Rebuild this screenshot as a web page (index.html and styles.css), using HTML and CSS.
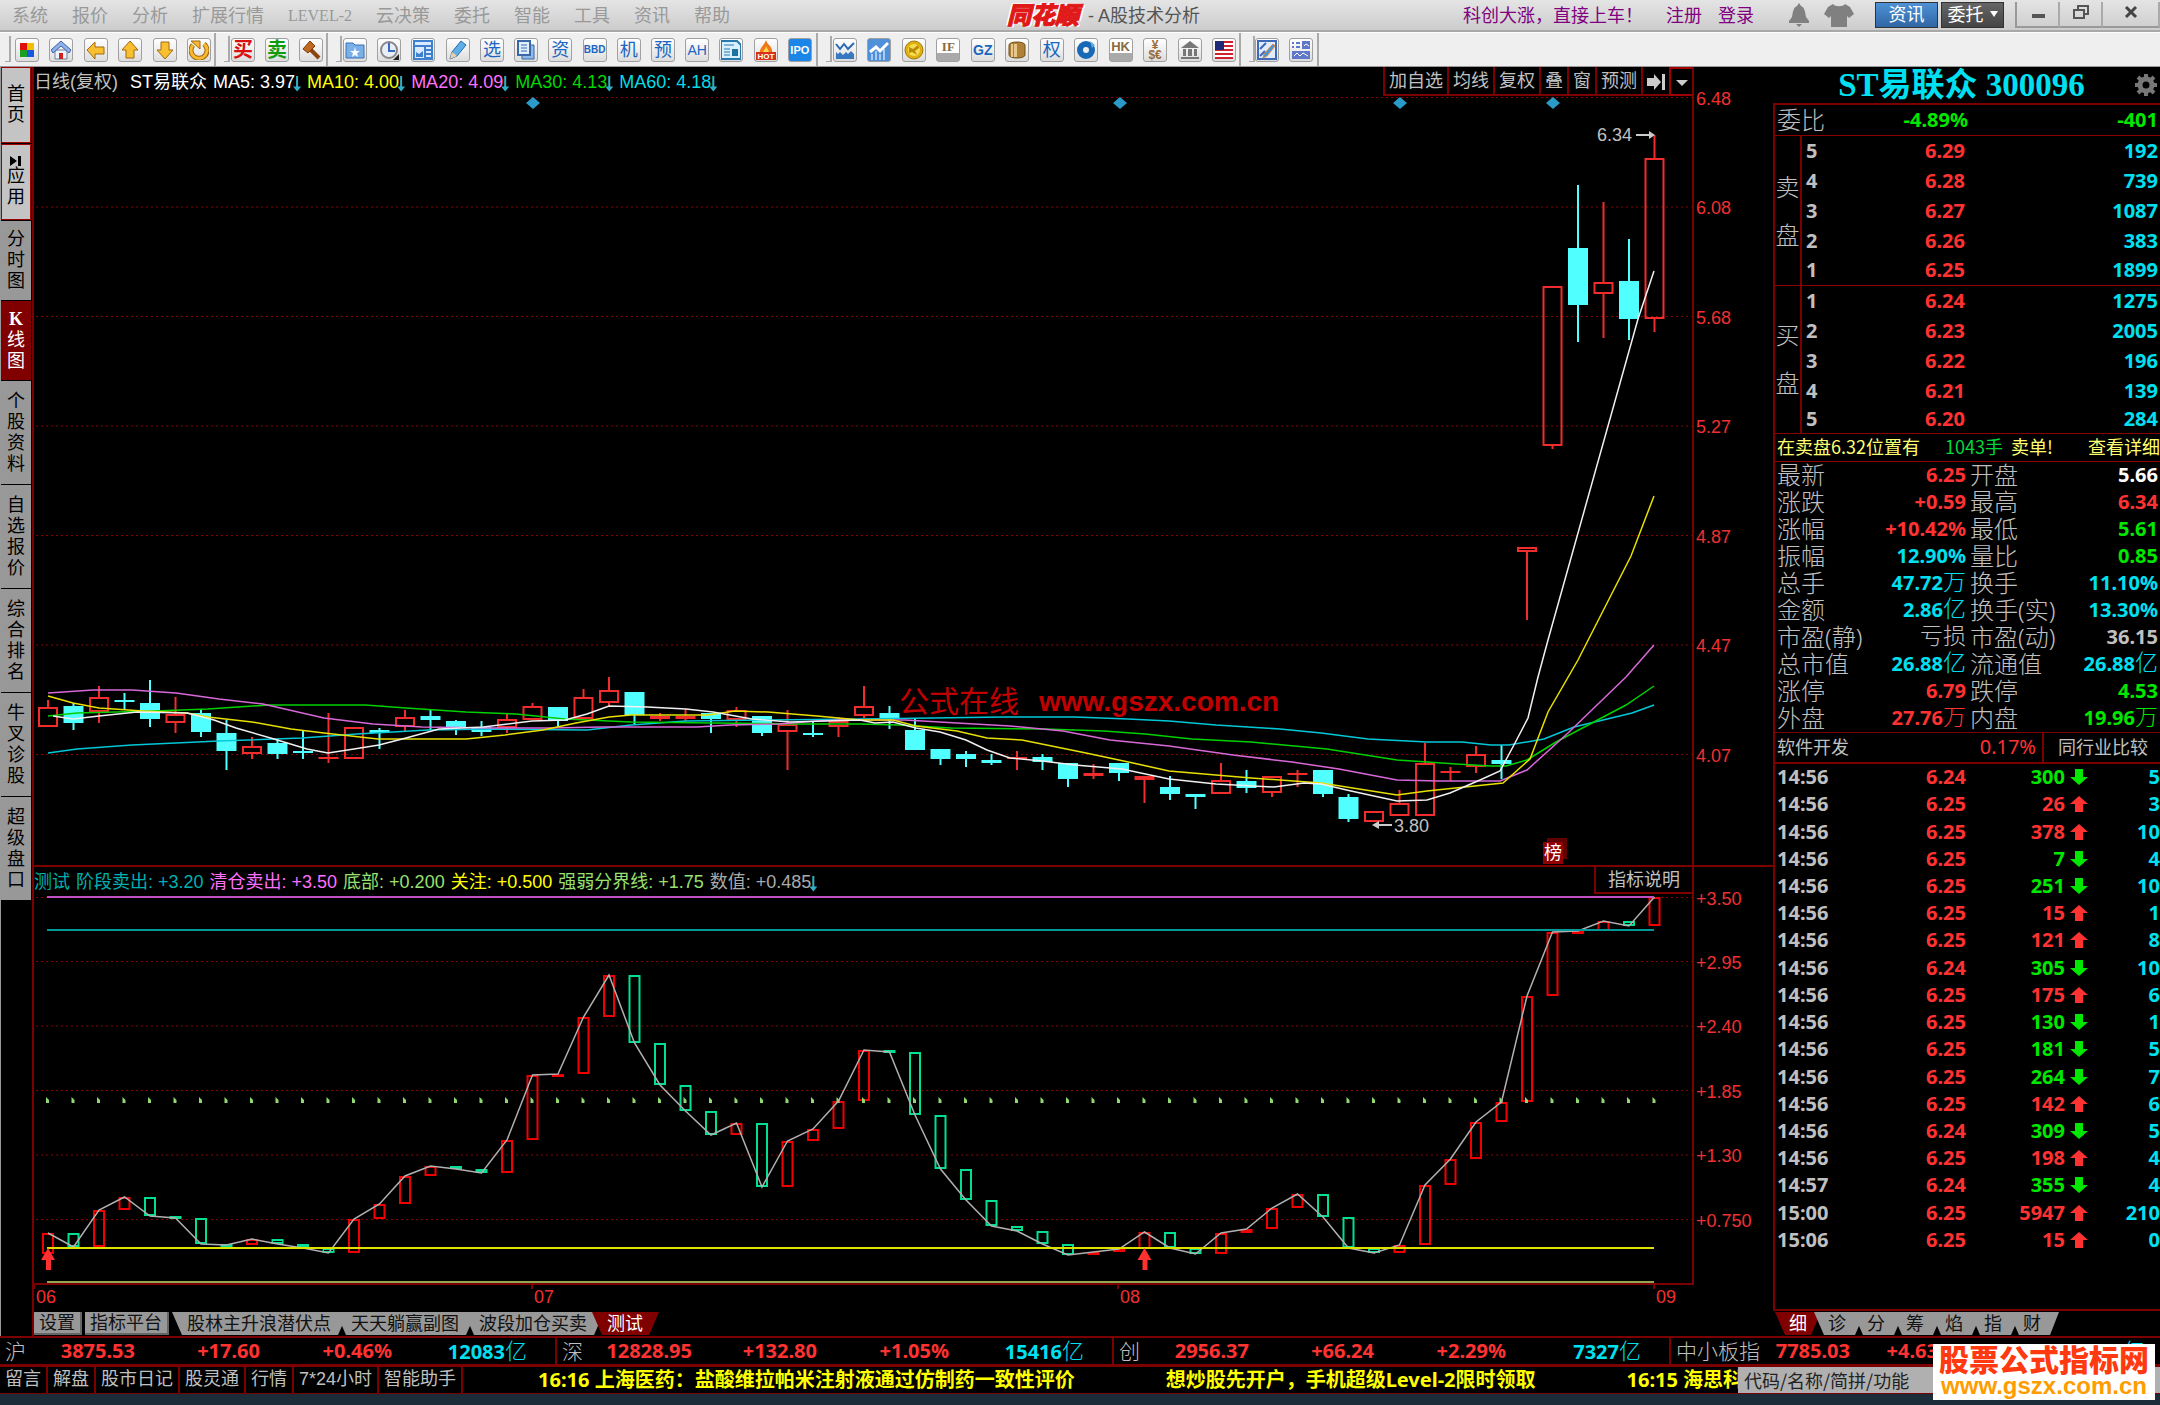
FILE: index.html
```html
<!DOCTYPE html>
<html lang="zh-CN">
<head>
  <meta charset="UTF-8">
  <meta name="viewport" content="width=device-width, initial-scale=1.0">
  <title>同花顺 - A股技术分析</title>
  <link rel="stylesheet" href="styles.css">
</head>
<body>
  <!-- title bar -->
  <header class="titlebar">
    <nav class="menu">
      <a href="#">系统</a><a href="#">报价</a><a href="#">分析</a><a href="#">扩展行情</a><a href="#" class="level">LEVEL-2</a><a href="#">云决策</a><a href="#">委托</a><a href="#">智能</a><a href="#">工具</a><a href="#">资讯</a><a href="#">帮助</a>
    </nav>
    <div class="caption"><span class="brand">同花顺</span><span>- A股技术分析</span></div>
    <div class="account">
      <a href="#" class="promo">科创大涨，直接上车！</a>
      <a href="#">注册</a>
      <a href="#">登录</a>
    </div>
    <svg class="bell" viewBox="0 0 22 24"><path d="M11 0l2 3c4 2 4 6 5 11l3 4v2H1v-2l3-4C5 9 5 5 9 3zM8 21h6l-3 3z" fill="#808080"/></svg>
    <svg class="shirt" viewBox="0 0 30 24"><path d="M9 1c2 3 10 3 12 0l5 3 4 7-5 4-2-2v11H7V13l-2 2-5-4 4-7z" fill="#808080"/></svg>
    <button class="head-btn blue">资讯</button>
    <button class="head-btn dark">委托<svg viewBox="0 0 8 6"><path d="M0 0h8L4 6z" fill="#fff"/></svg></button>
    <div class="win">
      <button aria-label="最小化"><svg viewBox="0 0 16 16"><path d="M2 10h13v4H2z" fill="#555"/></svg></button>
      <button aria-label="还原"><svg viewBox="0 0 16 16"><path d="M5 5V2h10v8h-4M1 6h10v8H1z" fill="none" stroke="#555" stroke-width="2"/></svg></button>
      <button aria-label="关闭"><svg viewBox="0 0 16 16"><path d="M3 3l10 10M13 3L3 13" stroke="#444" stroke-width="3"/></svg></button>
    </div>
  </header>

  <!-- icon toolbar -->
  <div class="toolbar">
    <div class="tools g1">
      <button aria-label="行情"><svg viewBox="0 0 20 20"><path d="M3 3h7v7H3z" fill="#e01010"/><path d="M10 3h7v7h-7z" fill="#f0c000"/><path d="M3 10h7v7H3z" fill="#18a020"/><path d="M10 10h7v7h-7z" fill="#1858e0"/></svg></button>
      <button aria-label="主页"><svg viewBox="0 0 20 20"><path d="M4 10h12v9H4z" fill="#eef2fa" stroke="#7080a0"/><path d="M10 1L0 10l2 3 8-7 8 7 2-3z" fill="#90b0e8" stroke="#4060a8"/><path d="M8 13h4v6H8z" fill="#d02020"/></svg></button>
      <button aria-label="后退"><svg viewBox="0 0 20 20"><path d="M1 10l8-8v5h9v7H9v5z" fill="#f8c030" stroke="#a06810"/></svg></button>
      <button aria-label="向上"><svg viewBox="0 0 20 20"><path d="M10 1l8 9h-4v8H6v-8H2z" fill="#f8c030" stroke="#a06810"/></svg></button>
      <button aria-label="向下"><svg viewBox="0 0 20 20"><path d="M10 19l8-9h-4V2H6v8H2z" fill="#f8c030" stroke="#a06810"/></svg></button>
      <button aria-label="刷新"><svg viewBox="0 0 20 20"><path d="M4 5a8 8 0 1 0 11-1" fill="none" stroke="#a06810" stroke-width="5"/><path d="M4 5a8 8 0 1 0 11-1" fill="none" stroke="#f8b830" stroke-width="3"/><path d="M2 1h9v8z" fill="#f8b830" stroke="#a06810"/></svg></button>
    </div>
    <div class="tools g2">
      <button class="buy">买</button>
      <button class="sell">卖</button>
      <button aria-label="委托"><svg viewBox="0 0 20 20"><path d="M9 9l9 9" stroke="#8a4510" stroke-width="4"/><path d="M2 9l7-8 5 5-7 7z" fill="#c06a20" stroke="#7a3a08"/></svg></button>
    </div>
    <div class="tools g3">
      <button aria-label="自选股"><svg viewBox="0 0 20 20"><path d="M1 3h7l2 2h9v13H1z" fill="#7ab0e8" stroke="#3870b8"/><path d="M10 7l1 4h4l-3 2 1 4-3-2-3 2 1-4-3-2h4z" fill="#fff"/></svg></button>
      <button aria-label="历史"><svg viewBox="0 0 20 20"><circle cx="10" cy="10" r="8" fill="#e8eef8" stroke="#888" stroke-width="2"/><path d="M10 3v8h6" fill="none" stroke="#3868c0" stroke-width="2"/><path d="M20 14v6h-6z" fill="#222"/></svg></button>
      <button aria-label="报表"><svg viewBox="0 0 20 20"><path d="M0 0h20v20H0z" fill="#3f80cc"/><path d="M2 2h16v3H2zM2 7h9v11H2zM13 7h5v2h-5zM13 11h5v2h-5zM13 15h5v2h-5z" fill="#d8eaff"/><path d="M3 12l3 2 4-3v6H3z" fill="#3f80cc"/></svg></button>
      <button aria-label="画笔"><svg viewBox="0 0 20 20"><path d="M4 12L13 1l5 4L9 16l-7 3z" fill="#60b0e8" stroke="#2868a8"/><path d="M4 12l5 4-7 3z" fill="#f0d0a0"/></svg></button>
      <button>选</button>
      <button aria-label="文档"><svg viewBox="0 0 20 20"><path d="M6 5h12v14H6z" fill="#90b8e8" stroke="#3868a8"/><path d="M2 1h12v14H2z" fill="#e0eefc" stroke="#3868a8" stroke-width="2"/><path d="M5 5h6M5 8h6M5 11h6" stroke="#3868a8"/></svg></button>
      <button>资</button>
      <button class="narrow">BBD</button>
      <button>机</button>
      <button>预</button>
      <button class="latin">AH</button>
      <button aria-label="新闻"><svg viewBox="0 0 20 20"><path d="M0 1h16l4 4v14H0z" fill="#d8f0fc" stroke="#2878b0" stroke-width="2"/><path d="M3 5h10M3 9h6M3 12h6M3 15h6" stroke="#2878b0"/><path d="M11 9h6v7h-6z" fill="#2070a0"/></svg></button>
      <button aria-label="热点"><svg viewBox="0 0 20 20"><path d="M10 0c1 5 7 6 6 13H4C3 8 8 6 10 0z" fill="#f07818"/><path d="M10 6c1 3 3 4 3 7H7c0-3 3-4 3-7z" fill="#ffd850"/><path d="M0 12h20v8H0z" fill="#d83018"/><text x="10" y="19" class="ico-hot">HOT</text></svg></button>
      <button class="ipo">IPO</button>
    </div>
    <div class="tools g4">
      <button aria-label="大盘"><svg viewBox="0 0 20 20"><path d="M1 4l4 5 4-5 4 5 6-6" fill="none" stroke="#2868b0" stroke-width="2"/><path d="M1 12l2 2 2-2 3 3 3-3 2 2 3-3 3 3v5H1z" fill="#3878c0"/></svg></button>
      <button class="full" aria-label="走势"><svg viewBox="0 0 20 20"><path d="M0 0h20v20H0z" fill="#5090d8"/><path d="M3 14v6M7 11v9M11 14v6M15 9v11" stroke="#a8ccf4" stroke-width="2"/><path d="M1 12l6-5 4 4 8-8" fill="none" stroke="#fff" stroke-width="3"/></svg></button>
      <button aria-label="期货"><svg viewBox="0 0 20 20"><circle cx="10" cy="10" r="9" fill="#e0b010" stroke="#a07808"/><circle cx="10" cy="10" r="6" fill="#f8dc50"/><path d="M5 7l4 2 5-4 1 3-4 3 2 4-5-3-3 1z" fill="#b88a08"/></svg></button>
      <button class="stamp serif">IF</button>
      <button class="latin bold">GZ</button>
      <button aria-label="基金"><svg viewBox="0 0 20 20"><path d="M2 5c0-4 16-4 16 0v10c0 4-16 4-16 0z" fill="#b08038" stroke="#705018"/><path d="M4 4h2v13H4zM7 4h3v13H7z" fill="#e8c888"/></svg></button>
      <button>权</button>
      <button aria-label="外汇"><svg viewBox="0 0 20 20"><circle cx="10" cy="10" r="6" fill="none" stroke="#1868b8" stroke-width="6"/><path d="M14 1l5 4-3 3z" fill="#60a8e8"/></svg></button>
      <button class="stamp">HK</button>
      <button class="money"><span>¥</span><span>$€</span></button>
      <button aria-label="债券"><svg viewBox="0 0 20 20"><path d="M10 1l9 7H1z" fill="#777"/><path d="M3 9h3v7H3zM8 9h4v7H8zM14 9h3v7h-3zM1 17h18v2H1z" fill="#777"/></svg></button>
      <button aria-label="美股"><svg viewBox="0 0 20 20"><path d="M1 1h18v18H1z" fill="#fff"/><path d="M1 2h18M1 6h18M1 10h18M1 14h18M1 18h18" stroke="#d02030" stroke-width="2"/><path d="M1 1h9v9H1z" fill="#202878"/></svg></button>
    </div>
    <div class="tools g5">
      <button aria-label="画线"><svg viewBox="0 0 20 20"><path d="M1 1h18v18H1z" fill="#e0ecfa" stroke="#4068b8" stroke-width="2"/><path d="M3 9l6-6M3 16l5-5" stroke="#4068b8" stroke-width="2"/><path d="M7 14l9-10 2 2L10 16l-4 2z" fill="#4098e0" stroke="#e08030"/></svg></button>
      <button aria-label="版面"><svg viewBox="0 0 20 20"><path d="M1 2h2v2H1zM5 2h4v2H5zM1 6h2v2H1zM5 6h4v2H5zM11 1h8v8h-8zM1 11h18v8H1z" fill="#6078c8"/><path d="M3 16l3-3 3 3 3-3 5 3M13 6l2-2 3 2" fill="none" stroke="#fff"/></svg></button>
    </div>
  </div>

  <main class="workspace">
    <nav class="side-tabs">
      <a href="#" class="light">首页</a>
      <a href="#" class="light"><svg viewBox="0 0 12 10"><path d="M0 0l7 5-7 5zM8 0h3v10H8z"/></svg>应用</a>
      <a href="#" class="t3">分时图</a>
      <a href="#" class="t3 active"><b>K</b>线图</a>
      <a href="#">个股资料</a>
      <a href="#">自选报价</a>
      <a href="#">综合排名</a>
      <a href="#">牛叉诊股</a>
      <a href="#">超级盘口</a>
    </nav>

    <section class="charts">
      <div class="chart-head">
        <div class="legend">
          <span>日线(复权)</span>
          <span class="white name">ST易联众</span>
          <span class="white dn">MA5: 3.97</span>
          <span class="yellow dn">MA10: 4.00</span>
          <span class="pink dn">MA20: 4.09</span>
          <span class="green dn">MA30: 4.13</span>
          <span class="cyan dn">MA60: 4.18</span>
        </div>
        <div class="chart-btns">
          <button>加自选</button><button>均线</button><button>复权</button><button>叠</button><button>窗</button><button>预测</button><button aria-label="移到最右"><svg viewBox="0 0 18 16"><path d="M0 4h7V0l7 8-7 8v-4H0zM15 0h3v16h-3z" fill="#ccc"/></svg></button><button class="more" aria-label="更多"><svg class="tri" viewBox="0 0 12 6"><path d="M0 0h12L6 6z" fill="#ccc"/></svg></button>
        </div>
      </div>
      <svg id="kline" class="plot" viewBox="34 96 1739 769"></svg>
      <div class="chart-head sub">
        <div class="legend">
          <span class="teal">测试</span>
          <span class="teal">阶段卖出: +3.20</span>
          <span class="pink">清仓卖出: +3.50</span>
          <span class="lime">底部: +0.200</span>
          <span class="yellow">关注: +0.500</span>
          <span class="lime">强弱分界线: +1.75</span>
          <span class="gray dn">数值: +0.485</span>
        </div>
        <button class="explain">指标说明</button>
      </div>
      <svg id="indicator" class="plot" viewBox="34 894 1739 414"></svg>
      <div class="bottom-tabs">
        <button class="flat">设置</button>
        <button class="flat">指标平台</button>
        <button class="slant first">股林主升浪潜伏点</button>
        <button class="slant">天天躺赢副图</button>
        <button class="slant">波段加仓买卖</button>
        <button class="slant on">测试</button>
      </div>
    </section>

    <aside class="quote">
      <h1>ST易联众 300096
        <svg class="gear" viewBox="0 0 24 24"><circle cx="12" cy="12" r="6" fill="none" stroke="#777" stroke-width="5"/><path d="M12 1v4M12 19v4M1 12h4M19 12h4M4 4l3 3M17 17l3 3M20 4l-3 3M7 17l-3 3" stroke="#777" stroke-width="4"/></svg>
      </h1>
      <div class="panel">
        <div class="ratio"><span>委比</span><b>-4.89%</b><b>-401</b></div>
        <table class="book">
          <tbody>
            <tr><th rowspan="5">卖<br>盘</th><td>5</td><td>6.29</td><td>192</td></tr>
            <tr><td>4</td><td>6.28</td><td>739</td></tr>
            <tr><td>3</td><td>6.27</td><td>1087</td></tr>
            <tr><td>2</td><td>6.26</td><td>383</td></tr>
            <tr><td>1</td><td>6.25</td><td>1899</td></tr>
          </tbody>
          <tbody>
            <tr><th rowspan="5">买<br>盘</th><td>1</td><td>6.24</td><td>1275</td></tr>
            <tr><td>2</td><td>6.23</td><td>2005</td></tr>
            <tr><td>3</td><td>6.22</td><td>196</td></tr>
            <tr><td>4</td><td>6.21</td><td>139</td></tr>
            <tr><td>5</td><td>6.20</td><td>284</td></tr>
          </tbody>
        </table>
        <div class="notice"><span>在卖盘6.32位置有</span><span class="num">1043手</span><span>卖单!</span><a href="#">查看详细</a></div>
        <table class="stats">
          <tr><th>最新</th><td class="up">6.25</td><th>开盘</th><td class="flat-v">5.66</td></tr>
          <tr><th>涨跌</th><td class="up">+0.59</td><th>最高</th><td class="up">6.34</td></tr>
          <tr><th>涨幅</th><td class="up">+10.42%</td><th>最低</th><td class="down">5.61</td></tr>
          <tr><th>振幅</th><td class="vol">12.90%</td><th>量比</th><td class="down">0.85</td></tr>
          <tr><th>总手</th><td class="vol">47.72<i>万</i></td><th>换手</th><td class="vol">11.10%</td></tr>
          <tr><th>金额</th><td class="vol">2.86<i>亿</i></td><th>换手(实)</th><td class="vol">13.30%</td></tr>
          <tr><th>市盈(静)</th><td><i>亏损</i></td><th>市盈(动)</th><td>36.15</td></tr>
          <tr><th>总市值</th><td class="vol">26.88<i>亿</i></td><th>流通值</th><td class="vol">26.88<i>亿</i></td></tr>
          <tr><th>涨停</th><td class="up">6.79</td><th>跌停</th><td class="down">4.53</td></tr>
          <tr><th>外盘</th><td class="up">27.76<i>万</i></td><th>内盘</th><td class="down">19.96<i>万</i></td></tr>
        </table>
        <div class="industry"><span>软件开发</span><span class="pct">0.17%</span><a href="#">同行业比较</a></div>
        <table class="ticks"><tbody id="ticks"></tbody></table>
      </div>
      <div class="bottom-tabs side">
        <button class="slant on">细</button><button class="slant">诊</button><button class="slant">分</button><button class="slant">筹</button><button class="slant">焰</button><button class="slant">指</button><button class="slant last">财</button>
      </div>
    </aside>
  </main>

  <footer class="footer">
    <div class="indices">
      <div class="index"><span>沪</span><b>3875.53</b><b>+17.60</b><b>+0.46%</b><b class="amt">12083<i>亿</i></b></div>
      <div class="index"><span>深</span><b>12828.95</b><b>+132.80</b><b>+1.05%</b><b class="amt">15416<i>亿</i></b></div>
      <div class="index"><span>创</span><b>2956.37</b><b>+66.24</b><b>+2.29%</b><b class="amt">7327<i>亿</i></b></div>
      <div class="index wide"><span>中小板指</span><b>7785.03</b><b>+4.63</b><b>0.06%</b><b class="amt">1217<i>亿</i></b></div>
    </div>
    <div class="newsbar">
      <div class="links"><a href="#">留言</a><a href="#">解盘</a><a href="#">股市日记</a><a href="#">股灵通</a><a href="#">行情</a><a href="#">7*24小时</a><a href="#">智能助手</a></div>
      <div class="news">
        <span>16:16 上海医药：盐酸维拉帕米注射液通过仿制药一致性评价</span>
        <span>想炒股先开户，手机超级Level-2限时领取</span>
        <span>16:15 海思科</span>
      </div>
      <input class="search" type="text" placeholder="代码/名称/简拼/功能" aria-label="代码/名称/简拼/功能">
    </div>
    <div class="strip"></div>
    <div class="sitemark"><strong>股票公式指标网</strong><span>www.gszx.com.cn</span></div>
  </footer>
  <script src="chart.js"></script>
</body>
</html>
```
FILE: styles.css
```css
* {
  margin: 0;
  padding: 0;
  box-sizing: border-box;
}

body {
  min-height: 100vh;
  display: flex;
  flex-direction: column;
  background: #000;
  color: #c0c0c0;
  font-family: "Liberation Sans", "Noto Sans CJK SC", sans-serif;
  font-size: 18px;
  line-height: 24px;
  overflow-x: hidden;
}

a {
  color: inherit;
  text-decoration: none;
}

button {
  border: 0;
  background: none;
  color: inherit;
  font: inherit;
  white-space: nowrap;
}

i {
  font-style: normal;
}

table {
  border-collapse: collapse;
  width: 100%;
}

/* Title bar */
.titlebar {
  height: 32px;
  display: flex;
  align-items: center;
  position: relative;
  background: linear-gradient(#e4e4e4, #cdcdcd);
  border-bottom: 2px solid #a8a8a8;
}

.menu {
  display: flex;
  align-items: center;
  padding-top: 2px;
  color: #999;
}

.menu a {
  padding: 0 12px;
}

.menu .level {
  font-family: "Liberation Serif", serif;
  font-size: 16px;
}

.caption {
  position: absolute;
  left: 1007px;
  display: flex;
  align-items: center;
  gap: 9px;
  padding-top: 2px;
  color: #555;
}

.brand {
  color: #e01818;
  font-size: 24px;
  font-weight: 900;
  font-style: italic;
  -webkit-text-stroke: 1px #e01818;
  text-shadow: 0 0 2px #fff, 2px 1px 0 #fff, -2px -1px 0 #fff;
}

.account {
  margin-left: auto;
  display: flex;
  gap: 16px;
  padding-top: 2px;
  color: #800080;
}

.promo {
  margin-right: 7px;
}

.bell {
  width: 22px;
  height: 24px;
  margin-left: 34px;
}

.shirt {
  width: 30px;
  height: 24px;
  margin: 0 21px 0 14px;
}

.head-btn {
  width: 63px;
  height: 26px;
  margin-right: 3px;
  color: #fff;
  border: 1px solid #333;
}

.head-btn svg {
  width: 8px;
  height: 6px;
  margin: 0 0 4px 6px;
}

.blue {
  background: linear-gradient(#4f92d6, #2f66a4);
}

.dark {
  background: linear-gradient(#666, #444);
}

.win {
  display: flex;
  margin-left: 8px;
  border-left: 2px solid #999;
}

.win button {
  width: 43px;
  height: 26px;
  border-right: 2px solid #aaa;
  border-bottom: 2px solid #999;
}

.win button:last-child {
  width: 57px;
}

.win svg {
  width: 16px;
  height: 16px;
}

/* Toolbar */
.toolbar {
  height: 35px;
  display: flex;
  gap: 3px;
  background: #efefef;
  border-top: 1px solid #fff;
  border-bottom: 1px solid #999;
}

.tools {
  display: flex;
  align-items: center;
  justify-content: space-between;
  padding: 0 3px 0 15px;
  border-right: 2px solid #aaa;
  position: relative;
}

/* grip at the left of every group */
.tools::before {
  content: "";
  position: absolute;
  left: 5px;
  top: 3px;
  bottom: 4px;
  width: 4px;
  border: solid #aaa;
  border-width: 0 2px 1px 0;
}

.g1 { width: 216px; }
.g2 { width: 109px; padding-left: 12px; }
.g3 { width: 487px; padding-left: 12px; padding-right: 4px; }
.g4 { width: 420px; padding-left: 12px; }
.g5 { width: 75px; padding-left: 11px; padding-right: 4px; }

.tools button {
  width: 24px;
  height: 24px;
  flex: none;
  display: flex;
  align-items: center;
  justify-content: center;
  border: 1px solid #a0a0a0;
  border-radius: 3px;
  background: linear-gradient(#fff, #ddd);
  color: #1a66c0;
  overflow: hidden;
}

.tools svg {
  width: 20px;
  height: 20px;
  flex: none;
}

.tools .buy,
.tools .sell {
  font-size: 20px;
  font-weight: bold;
}

.tools .buy { color: #d81010; }
.tools .sell { color: #109a10; }

.tools .full {
  background: #5090d8;
}

.tools .narrow {
  font-size: 10px;
  font-weight: bold;
}

.tools .latin {
  font-size: 14px;
}

.tools .bold {
  font-weight: bold;
}

.tools .ipo {
  font-size: 11px;
  font-weight: bold;
  color: #fff;
  background: #1c86e8;
}

.tools .stamp {
  font-size: 13px;
  font-weight: bold;
  line-height: 12px;
  color: #8a6a40;
  padding-bottom: 6px;
  background: linear-gradient(#fff 0 65%, #aaa 65%);
}

.tools .serif {
  font-family: "Liberation Serif", serif;
}

.tools .money {
  flex-direction: column;
  font-size: 12px;
  font-weight: bold;
  line-height: 10px;
  color: #9a6a38;
}

.ico-hot {
  font-size: 8px;
  font-weight: bold;
  fill: #fff;
  text-anchor: middle;
}

/* Work area */
.workspace {
  flex: 1;
  display: flex;
}

.side-tabs {
  width: 34px;
  flex: none;
  display: flex;
  flex-direction: column;
  gap: 1px;
  padding-right: 1px;
  border-left: 1px solid #999;
  border-right: 2px solid #7c0000;
}

.side-tabs a {
  height: 103px;
  display: flex;
  flex-direction: column;
  align-items: center;
  justify-content: center;
  padding: 0 6px;
  background: #989898;
  color: #000;
  line-height: 21px;
  word-break: break-all;
}

.side-tabs .light {
  height: 76px;
  padding: 0 5px;
  background: #c4c4c4;
  border: 1px solid #a00000;
}

.side-tabs .t3 {
  height: 79px;
}

.side-tabs .active {
  background: #800000;
  color: #fff;
}

.side-tabs b {
  font-family: "Liberation Serif", serif;
}

.side-tabs svg {
  width: 12px;
  height: 10px;
}

.charts {
  flex: 1;
  min-width: 0;
  display: flex;
  flex-direction: column;
}

.chart-head {
  height: 29px;
  flex: none;
  margin-right: 79px;
  display: flex;
  justify-content: space-between;
  border-right: 2px solid #7c0000;
}

.chart-head.sub {
  height: 27px;
}

.legend {
  display: flex;
  align-items: center;
  gap: 6px;
  white-space: nowrap;
}

.sub .legend {
  padding-top: 2px;
}

.name {
  margin-left: 6px;
}

/* falling value mark */
.dn {
  display: flex;
  align-items: center;
}

.dn::after {
  content: "";
  width: 8px;
  height: 16px;
  margin: 4px 0 0 -2px;
  background: #30b0c8;
  clip-path: polygon(3px 0, 5px 0, 5px 11px, 8px 11px, 4px 16px, 0 11px, 3px 11px);
}

.white { color: #fff; }
.yellow { color: #ff0; }
.pink { color: #ff70ff; }
.green { color: #00d800; }
.cyan { color: #00dce8; }
.teal { color: #00b0b0; }
.lime { color: #98e070; }
.gray { color: #aaa; }

.chart-btns {
  display: flex;
}

.chart-btns button {
  padding: 0 4px;
  border: solid #7c0000;
  border-width: 0 0 2px 2px;
}

.chart-btns .more {
  border: 2px solid #a00000;
  border-right: 0;
  width: 23px;
}

.chart-btns svg {
  width: 18px;
  height: 16px;
  vertical-align: middle;
}

.chart-btns .tri {
  width: 12px;
  height: 6px;
}

.explain {
  width: 98px;
  border: solid #7c0000;
  border-width: 0 0 2px 2px;
}

.plot {
  display: block;
  width: 100%;
  overflow: visible;
}

#kline {
  border-bottom: 2px solid #7c0000;
  box-sizing: content-box;
}

.plot .grid {
  stroke: #8c0000;
  stroke-dasharray: 2 3;
}

.plot .frame {
  stroke: #7c0000;
  stroke-width: 2;
  fill: none;
}

.plot .axis {
  fill: #f03030;
  font-size: 18px;
}

.plot .note {
  fill: #c0c0c0;
  font-size: 18px;
}

.plot .ma {
  fill: none;
  stroke-width: 1.5;
}

.plot .mark {
  fill: #c00000;
  font-size: 30px;
}

.plot .url {
  font-size: 28px;
  font-weight: bold;
}

.plot .badge {
  fill: #fff;
  font-size: 18px;
  text-anchor: middle;
}

/* Tabs under the charts */
.bottom-tabs {
  margin-top: auto;
  height: 24px;
  display: flex;
}

.bottom-tabs button {
  height: 23px;
  line-height: 22px;
  background: #989898;
  color: #111;
}

.bottom-tabs .flat {
  margin-right: 3px;
  padding: 0 5px;
  border: solid #666;
  border-width: 0 2px 2px 0;
}

.bottom-tabs .slant {
  padding: 0 12px 0 15px;
  margin-right: -7px;
  clip-path: polygon(0 0, calc(100% - 6px) 0, 100% 50%, calc(100% - 5px) 100%, 10px 100%);
}

.bottom-tabs .on {
  background: #800000;
  color: #fff;
  padding-right: 16px;
  clip-path: polygon(0 0, 100% 0, calc(100% - 10px) 100%, 10px 100%);
}

.side {
  padding-left: 2px;
}

.side .slant {
  padding: 0 14px;
}

.side .last {
  padding-right: 18px;
  clip-path: polygon(0 0, 100% 0, calc(100% - 9px) 100%, 10px 100%);
}

/* Quote panel */
.quote {
  width: 387px;
  flex: none;
  display: flex;
  flex-direction: column;
}

.quote h1 {
  height: 36px;
  line-height: 36px;
  padding-right: 10px;
  text-align: center;
  position: relative;
  color: #00e0f0;
  font-family: "Liberation Serif", "Noto Sans CJK SC", serif;
  font-size: 33px;
}

.gear {
  position: absolute;
  right: 2px;
  top: 6px;
  width: 24px;
  height: 24px;
}

.panel {
  height: 1208px;
  border: 2px solid #7c0000;
  border-right: 0;
  font-family: "Noto Sans", "Noto Sans CJK SC", sans-serif;
  font-size: 20px;
}

.panel td,
.panel b {
  font-weight: bold;
  text-align: right;
}

.panel th {
  font-size: 24px;
  font-weight: 300;
  text-align: left;
}

.ratio {
  height: 30px;
  display: grid;
  grid-template-columns: 60px 131px 1fr;
  align-items: center;
  padding: 0 2px;
  color: #00e800;
}

.ratio span {
  font-size: 24px;
  font-weight: 300;
  color: #c0c0c0;
}

.book tr {
  height: 30px;
}

.book tbody:last-child tr:last-child {
  height: 27px;
}

.book tbody {
  border-top: 1px solid #8c0000;
}

.book th {
  width: 26px;
  border-right: 2px solid #7c0000;
  line-height: 48px;
  text-align: center;
}

.book td:nth-last-child(3) {
  width: 30px;
  text-align: left;
  padding-left: 4px;
}

.book td:nth-last-child(2) {
  width: 134px;
  color: #ff3232;
}

.book td:last-child {
  color: #00e0f0;
  padding-right: 2px;
}

.notice {
  height: 29px;
  display: flex;
  align-items: center;
  padding: 0 0 2px 2px;
  border: solid #8c0000;
  border-width: 1px 0;
  color: #ffff70;
  font-family: "Noto Sans CJK SC", sans-serif;
  font-size: 18px;
  white-space: nowrap;
}

.notice .num {
  margin: 0 8px 0 25px;
  color: #00d840;
}

.notice a {
  margin-left: auto;
}

.stats {
  table-layout: fixed;
}

.stats tr {
  height: 27px;
  line-height: 26px;
}

.stats th {
  width: 99px;
  padding-left: 2px;
  white-space: nowrap;
}

.stats td {
  padding-right: 2px;
  white-space: nowrap;
}

.stats td:nth-child(2) {
  width: 94px;
}

.stats i {
  font-size: 23px;
  font-weight: 300;
  line-height: 20px;
}

.up { color: #ff3232; }
.down { color: #00e800; }
.vol { color: #00e0f0; }
.flat-v { color: #fff; }

.industry {
  height: 32px;
  display: flex;
  align-items: center;
  padding-left: 2px;
  border: solid #7c0000;
  border-width: 1px 0 2px;
  font-size: 18px;
}

.industry .pct {
  flex: 1;
  padding-right: 6px;
  text-align: right;
  color: #ff3232;
  font-size: 20px;
}

.industry a {
  width: 118px;
  line-height: 30px;
  padding-left: 14px;
  border-left: 2px solid #7c0000;
}

.ticks {
  height: 490px;
}

.ticks td:first-child {
  text-align: left;
  padding-left: 2px;
}

.ticks td:nth-child(2) {
  color: #ff3232;
  width: 99px;
}

.ticks td:nth-child(3) {
  width: 99px;
}

.ticks td:nth-child(4) {
  width: 23px;
  line-height: 0;
}

.ticks td:last-child {
  width: 72px;
  color: #00e0f0;
}

.ticks svg {
  width: 18px;
  height: 16px;
  fill: currentColor;
}

/* Footer */
.footer {
  position: relative;
  font-family: "Noto Sans", "Noto Sans CJK SC", sans-serif;
}

.indices {
  height: 31px;
  display: flex;
  border-top: 2px solid #7c0000;
  border-bottom: 3px solid #7c0000;
  overflow: hidden;
}

.index {
  flex: 0 0 557px;
  display: grid;
  grid-template-columns: 30px 100px 125px 132px 1fr;
  align-items: center;
  padding: 0 28px 0 5px;
  border-right: 2px solid #7c0000;
  color: #ff3232;
  font-size: 20px;
  text-align: right;
}

.index.wide {
  flex: 1;
  grid-template-columns: 88px 86px 88px 109px 98px;
  border: 0;
}

.index span {
  color: #c0c0c0;
  font-size: 21px;
  font-weight: 300;
  text-align: left;
}

.index .amt {
  color: #00e0f0;
}

.index i {
  font-size: 22px;
  font-weight: 300;
}

.newsbar {
  height: 27px;
  display: flex;
  border-bottom: 1px solid #7c0000;
}

.links {
  display: flex;
  font-family: "Liberation Sans", "Noto Sans CJK SC", sans-serif;
}

.links a {
  padding: 0 5px;
  border-right: 2px solid #7c0000;
  line-height: 25px;
}

.news {
  flex: 1 1 0;
  display: flex;
  gap: 91px;
  padding-left: 75px;
  overflow: hidden;
  white-space: nowrap;
  color: #ff0;
  font-size: 20px;
  font-weight: bold;
  line-height: 26px;
}

.search {
  width: 422px;
  border: 0;
  padding: 0 6px;
  background: #b0b0b0;
  font-family: "Noto Sans CJK SC", sans-serif;
  font-size: 18px;
}

.search::placeholder {
  color: #222;
  opacity: 1;
}

.strip {
  height: 11px;
  background: #1c2c38;
}

.sitemark {
  position: absolute;
  right: 5px;
  bottom: 5px;
  width: 222px;
  height: 56px;
  display: flex;
  flex-direction: column;
  align-items: center;
  background: #fff;
}

.sitemark strong {
  color: #ff3a10;
  font-size: 30px;
  font-weight: 900;
  line-height: 32px;
}

.sitemark span {
  color: #ff9c00;
  font-family: "Liberation Sans", sans-serif;
  font-size: 24px;
  font-weight: bold;
  line-height: 20px;
}
```
FILE: chart.js
```js
const NS = 'http://www.w3.org/2000/svg';
const X0 = 48, STEP = 25.5, RIGHT = 1693;

function add(svg, tag, attrs, text) {
  const el = document.createElementNS(NS, tag);
  for (const k in attrs) el.setAttribute(k, attrs[k]);
  if (text) el.textContent = text;
  svg.appendChild(el);
  return el;
}

function grid(svg, rows) {
  rows.forEach(([y, label]) => {
    add(svg, 'line', { x1: 36, x2: RIGHT, y1: y, y2: y, class: 'grid' });
    add(svg, 'text', { x: RIGHT + 3, y: y + 7, class: 'axis' }, label);
  });
}

const at = i => X0 + STEP * i;

// candles: type, high, body top, body bottom, low
const candles = `r 700 707 727 727|c 703 706 723 730|r 686 697 712 723|c 693 700 702 709|c 680 703 719 727|r 697 714 723 733|c 709 713 732 737|c 720 733 751 770
r 737 746 754 759|c 739 743 754 759|c 731 751 753 759|r 713 757 759 763|r 727 727 759 759|c 728 730 733 749|r 710 717 727 732|c 709 716 720 730
c 720 721 727 735|c 721 727 732 736|r 714 719 728 733|r 703 706 720 720|c 707 707 721 727|r 689 697 719 720|r 677 690 703 706|c 692 692 715 724
r 713 716 719 721|r 709 716 719 721|c 713 713 719 733|r 707 710 720 727|c 716 716 733 736|r 710 724 732 770|c 722 733 734 737|r 717 721 727 737
r 686 706 716 718|c 706 713 718 729|c 719 730 750 750|c 749 749 759 765|c 751 754 759 767|c 754 760 763 765|r 751 757 759 770|c 754 757 762 770
c 763 763 779 787|r 764 773 776 779|c 763 763 773 781|r 776 776 780 803|c 776 787 794 800|c 794 794 797 809|r 763 780 794 794|c 770 781 788 793
r 776 776 793 797|r 770 773 774 787|c 770 770 794 797|c 794 797 819 822|r 811 811 822 822|r 790 803 816 816|r 743 763 816 816|r 767 771 773 781
r 746 754 767 773|c 745 760 764 779|r 547 547 552 620|r 286 286 446 449|c 185 248 305 342|r 202 282 294 338|c 239 281 319 340|r 135 158 319 332`
  .split(/[|\n]/).map(s => s.split(' '));

const averages = {
  '#00c8d8': '48,753 77,749 132,745 219,741 302,738 357,734 428,730 494,729 587,730 631,725 686,721 768,720 860,719 1004,717 1075,717 1128,719 1169,721 1216,725 1280,729 1321,733 1368,739 1427,742 1462,742 1491,745 1509,745 1544,739 1574,727 1632,713 1654,705',
  '#00d000': '48,716 77,713 154,711 208,709 269,705 365,705 406,708 466,712 516,714 565,719 631,722 713,723 801,724 860,724 899,725 951,728 1045,729 1104,731 1145,734 1192,739 1251,742 1327,749 1397,760 1427,762 1456,764 1491,766 1506,766 1527,760 1556,742 1626,705 1654,686',
  '#d868d8': '48,693 93,690 132,690 176,693 219,699 263,704 324,718 373,724 422,727 494,728 549,728 603,727 697,727 730,725 779,724 817,721 840,720 905,720 957,723 1010,726 1063,731 1110,740 1169,746 1233,755 1292,762 1339,769 1397,780 1439,781 1500,781 1527,770 1568,733 1626,677 1654,645',
  '#e8e000': '48,696 73,703 99,708 143,711 187,713 208,717 252,722 291,729 324,733 378,739 466,739 505,735 543,730 576,723 609,717 631,715 708,715 735,711 768,712 817,716 860,720 893,720 916,726 957,731 987,738 1022,740 1086,753 1133,763 1169,771 1251,778 1321,783 1397,795 1427,791 1503,783 1530,759 1548,712 1578,660 1631,556 1654,496',
  '#f0f0f0': '53,716 73,719 99,716 137,712 187,713 214,720 236,728 274,739 307,749 328,753 354,749 379,745 406,738 439,729 483,727 532,721 565,720 587,714 609,706 647,707 686,709 713,712 752,719 790,722 860,720 875,723 893,722 916,728 940,732 966,740 987,750 1010,758 1042,761 1075,765 1122,769 1169,779 1216,784 1274,787 1304,783 1321,784 1351,791 1397,801 1427,800 1450,793 1480,780 1500,771 1515,743 1528,718 1538,677 1548,640 1638,319 1654,271'
};

const k = document.getElementById('kline');
grid(k, [[97.5, '6.48'], [207, '6.08'], [316.5, '5.68'], [426, '5.27'], [535.5, '4.87'], [645, '4.47'], [754.5, '4.07']]);
add(k, 'line', { x1: RIGHT, x2: RIGHT, y1: 96, y2: 866, class: 'frame' });
[533, 1120, 1400, 1553].forEach(x => add(k, 'path', { d: `M${x} 97l7 6-7 6-7-6z`, fill: '#2a9ac8' }));

add(k, 'text', { x: 899, y: 712, class: 'mark' }, '公式在线');
add(k, 'text', { x: 1039, y: 711, class: 'mark url' }, 'www.gszx.com.cn');

candles.forEach(([type, h, t, b, l], i) => {
  const x = at(i), height = Math.max(b - t, 2);
  const color = type === 'r' ? '#f02c2c' : '#50ffff';
  const hollow = type === 'r' && height > 4;
  add(k, 'path', { d: `M${x} ${h}V${t}M${x} ${b}V${l}`, stroke: color, 'stroke-width': 2 });
  if (hollow) {
    add(k, 'rect', { x: x - 9, y: +t + 1, width: 18, height: height - 2, fill: 'none', stroke: color, 'stroke-width': 2 });
  } else {
    add(k, 'rect', { x: x - 10, y: t, width: 20, height, fill: color });
  }
});
for (const c in averages) add(k, 'polyline', { points: averages[c], stroke: c, class: 'ma' });

add(k, 'text', { x: 1597, y: 141, class: 'note' }, '6.34');
add(k, 'path', { d: 'M1636 134h13v-3l6 4-6 4v-3h-13z', fill: '#ccc' });
add(k, 'text', { x: 1394, y: 832, class: 'note' }, '3.80');
add(k, 'path', { d: 'M1392 824h-13v-3l-7 4 7 4v-3h13z', fill: '#ccc' });
add(k, 'rect', { x: 1547, y: 838, width: 20, height: 21, fill: '#600000' });
add(k, 'rect', { x: 1543, y: 842, width: 20, height: 22, fill: '#900000' });
add(k, 'text', { x: 1553, y: 859, class: 'badge' }, '榜');

// indicator closes, every bar opens where the last one closed
const closes = [1254, 1233, 1247, 1210, 1197, 1216, 1218, 1244, 1245, 1239, 1244, 1248, 1253, 1219, 1204, 1176, 1166,
  1169, 1173, 1140, 1075, 1074, 1017, 975, 1043, 1085, 1111, 1135, 1123, 1187, 1141, 1129, 1101, 1050, 1052, 1115, 1169,
  1200, 1226, 1231, 1244, 1255, 1252, 1249, 1232, 1248, 1254, 1233, 1229, 1208, 1194, 1217, 1248, 1253, 1245, 1185, 1159,
  1122, 1102, 996, 932, 931, 921, 926, 897];

const ind = document.getElementById('indicator');
grid(ind, [[897.5, '+3.50'], [961.5, '+2.95'], [1026, '+2.40'], [1090.5, '+1.85'], [1155, '+1.30'], [1219.5, '+0.750']]);
add(ind, 'path', { d: `M${RIGHT} 894V1284H34`, class: 'frame' });

const bars = closes.slice(1);
bars.forEach((y, i) => {
  const prev = closes[i], top = Math.min(y, prev), size = Math.abs(y - prev);
  const color = y <= prev ? '#f00000' : '#00e090';
  add(ind, 'rect', { x: at(i) - 5, y: top + 1, width: 10, height: Math.max(size - 2, 1), fill: 'none', stroke: color, 'stroke-width': 2 });
  add(ind, 'path', { d: `M${at(i) - 2} 1097v6h3v-3z`, fill: '#90d870' });
});
add(ind, 'polyline', { points: bars.map((y, i) => at(i) + ',' + y).join(' '), fill: 'none', stroke: '#b0b0b0', 'stroke-width': 1.5 });

[[897, '#c050c0'], [930, '#009898'], [1248, '#e0e000'], [1282, '#90a850']].forEach(([y, c]) =>
  add(ind, 'line', { x1: 47, x2: 1654, y1: y, y2: y, stroke: c, 'stroke-width': 2 }));

[0, 43].forEach(i => {
  const x = at(i);
  add(ind, 'path', { d: `M${x} 1248l7 12h-4v10h-5v-10h-5z`, fill: '#ff3030' });
});
[[34, '06'], [532, '07'], [1118, '08'], [1654, '09']].forEach(([x, s]) => {
  add(ind, 'line', { x1: x, x2: x, y1: 1284, y2: 1289, class: 'frame' });
  add(ind, 'text', { x: x + 2, y: 1303, class: 'axis' }, s);
});

// trade ticks: time, price, volume, direction, count
const ticks = `14:56 6.24 300 d 5|14:56 6.25 26 u 3|14:56 6.25 378 u 10|14:56 6.25 7 d 4|14:56 6.25 251 d 10|14:56 6.25 15 u 1
14:56 6.25 121 u 8|14:56 6.24 305 d 10|14:56 6.25 175 u 6|14:56 6.25 130 d 1|14:56 6.25 181 d 5|14:56 6.25 264 d 7
14:56 6.25 142 u 6|14:56 6.24 309 d 5|14:56 6.25 198 u 4|14:57 6.24 355 d 4|15:00 6.25 5947 u 210|15:06 6.25 15 u 0`;
const arrows = { u: 'M9 0l9 8h-5v8H5V8H0z', d: 'M9 16l9-8h-5V0H5v8H0z' };
document.getElementById('ticks').innerHTML = ticks.split(/[|\n]/).map(row => {
  const [time, price, vol, dir, n] = row.split(' ');
  const cls = dir === 'u' ? 'up' : 'down';
  return `<tr><td>${time}</td><td>${price}</td><td class="${cls}">${vol}</td>` +
    `<td class="${cls}"><svg viewBox="0 0 18 16"><path d="${arrows[dir]}"/></svg></td><td>${n}</td></tr>`;
}).join('');
```
